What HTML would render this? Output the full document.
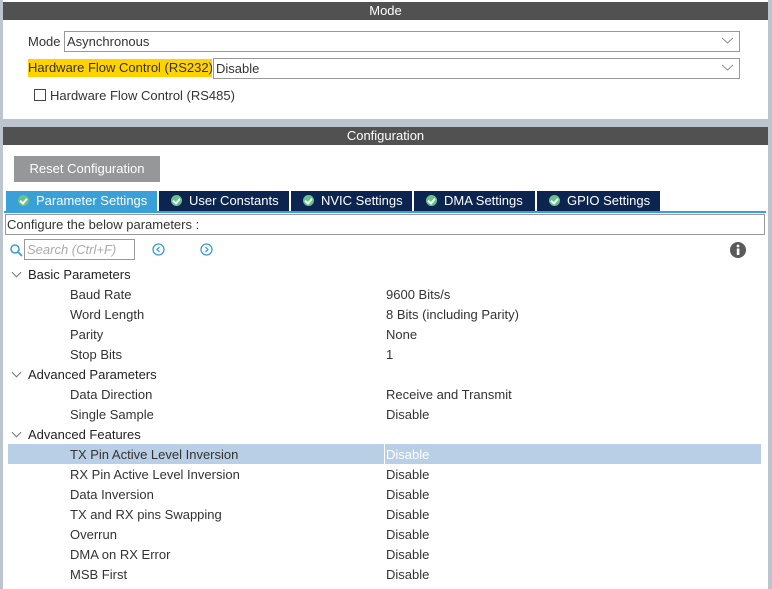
<!DOCTYPE html>
<html><head><meta charset="utf-8"><style>
*{margin:0;padding:0;box-sizing:border-box}
body{width:772px;height:589px;overflow:hidden;background:#bcc5cd;font-family:"Liberation Sans",Arial,sans-serif;font-size:13px;color:#333;position:relative}
.a{position:absolute;white-space:nowrap}
.hdr{background:#505150;color:#fff;text-align:center;font-size:13px;line-height:18px}
.sel{border:1px solid #999;background:#fff;height:21px;line-height:19px;padding-left:2px;color:#333}
.chev{position:absolute;right:6px;top:5px}
.tab{position:absolute;top:191px;height:20px;background:#0b2550;color:#fff;font-size:13px;line-height:20px;padding-left:12px;white-space:nowrap}
.tab i{display:inline-block;width:11px;height:11px;border-radius:50%;background:#66c28a;vertical-align:-1px;margin-right:7px;position:relative}
.tab i:after{content:"";position:absolute;left:3px;top:2px;width:3px;height:5px;border:solid #fff;border-width:0 2px 2px 0;transform:rotate(40deg)}
.row{position:absolute;left:8px;width:753px;height:20px;line-height:21px}
.row .k{position:absolute;left:62px}
.row .v{position:absolute;left:378px}
.g .k{left:20px}
.g:before{content:"";position:absolute;left:5px;top:5px;width:6px;height:6px;border:solid #777;border-width:0 1px 1px 0;transform:rotate(45deg)}
</style></head><body>
<div class="a" style="left:3px;top:0;width:765px;height:119px;background:#fff"></div>
<div class="a hdr" style="left:3px;top:2px;width:765px;height:18px">Mode</div>
<div class="a" style="left:28px;top:33px;line-height:17px">Mode</div>
<div class="a sel" style="left:64px;top:31px;width:676px">Asynchronous<svg class="chev" width="11" height="7"><path d="M0 1L5.5 6L11 1" fill="none" stroke="#888"/></svg></div>
<div class="a" style="left:28px;top:59px;width:184px;height:18px;background:#ffd200;line-height:18px;overflow:hidden">Hardware Flow Control (RS232)</div>
<div class="a sel" style="left:213px;top:58px;width:527px">Disable<svg class="chev" width="11" height="7"><path d="M0 1L5.5 6L11 1" fill="none" stroke="#888"/></svg></div>
<div class="a" style="left:34px;top:89px;width:12px;height:12px;border:1px solid #444;background:#fff"></div>
<div class="a" style="left:50px;top:87px;line-height:17px">Hardware Flow Control (RS485)</div>

<div class="a" style="left:3px;top:127px;width:765px;height:462px;background:#fff"></div>
<div class="a hdr" style="left:3px;top:127px;width:765px;height:18px">Configuration</div>
<div class="a" style="left:14px;top:156px;width:146px;height:26px;background:#959799;color:#fff;line-height:26px;text-align:center;font-size:13px">Reset Configuration</div>
<div class="tab" style="left:6px;width:151px;background:#3aa0d8"><i></i>Parameter Settings</div>
<div class="tab" style="left:159px;width:130px"><i></i>User Constants</div>
<div class="tab" style="left:291px;width:121px"><i></i>NVIC Settings</div>
<div class="tab" style="left:414px;width:121px"><i></i>DMA Settings</div>
<div class="tab" style="left:537px;width:123px"><i></i>GPIO Settings</div>
<div class="a" style="left:4px;top:211px;width:762px;height:2px;background:#3aa0d8"></div>
<div class="a" style="left:5px;top:214px;width:760px;height:21px;border:1px solid #999;line-height:20px;padding-left:1px">Configure the below parameters :</div>
<svg class="a" style="left:10px;top:244px" width="13" height="13"><circle cx="5" cy="5" r="4" fill="none" stroke="#3a9fd6" stroke-width="1.6"/><path d="M8 8L12 12" stroke="#3a9fd6" stroke-width="1.8"/></svg>
<div class="a" style="left:24px;top:239px;width:111px;height:21px;border:1px solid #999;color:#aaa;font-style:italic;line-height:20px;padding-left:2px">Search (Ctrl+F)</div>
<svg class="a" style="left:152px;top:243px" width="13" height="13"><circle cx="6.5" cy="6.5" r="5.5" fill="none" stroke="#3a9fd6" stroke-width="1.3"/><path d="M7.5 4L5 6.5L7.5 9" fill="none" stroke="#3a9fd6" stroke-width="1.3"/></svg>
<svg class="a" style="left:200px;top:243px" width="13" height="13"><circle cx="6.5" cy="6.5" r="5.5" fill="none" stroke="#3a9fd6" stroke-width="1.3"/><path d="M5.5 4L8 6.5L5.5 9" fill="none" stroke="#3a9fd6" stroke-width="1.3"/></svg>
<svg class="a" style="left:730px;top:242px" width="16" height="16"><circle cx="8" cy="8" r="8" fill="#5a5a5a"/><rect x="6.8" y="6.5" width="2.6" height="6.5" fill="#fff"/><circle cx="8" cy="4" r="1.4" fill="#fff"/></svg>

<div class="row g" style="top:264px"><span class="k" style="color:#222">Basic Parameters</span></div>
<div class="row" style="top:284px"><span class="k">Baud Rate</span><span class="v">9600 Bits/s</span></div>
<div class="row" style="top:304px"><span class="k">Word Length</span><span class="v">8 Bits (including Parity)</span></div>
<div class="row" style="top:324px"><span class="k">Parity</span><span class="v">None</span></div>
<div class="row" style="top:344px"><span class="k">Stop Bits</span><span class="v">1</span></div>
<div class="row g" style="top:364px"><span class="k" style="color:#222">Advanced Parameters</span></div>
<div class="row" style="top:384px"><span class="k">Data Direction</span><span class="v">Receive and Transmit</span></div>
<div class="row" style="top:404px"><span class="k">Single Sample</span><span class="v">Disable</span></div>
<div class="row g" style="top:424px"><span class="k" style="color:#222">Advanced Features</span></div>
<div class="row" style="top:444px;background:#b9cfe6"><div class="a" style="left:376px;top:0;width:1px;height:20px;background:#fff"></div><span class="k">TX Pin Active Level Inversion</span><span class="v" style="color:#fff">Disable</span></div>
<div class="row" style="top:464px"><span class="k">RX Pin Active Level Inversion</span><span class="v">Disable</span></div>
<div class="row" style="top:484px"><span class="k">Data Inversion</span><span class="v">Disable</span></div>
<div class="row" style="top:504px"><span class="k">TX and RX pins Swapping</span><span class="v">Disable</span></div>
<div class="row" style="top:524px"><span class="k">Overrun</span><span class="v">Disable</span></div>
<div class="row" style="top:544px"><span class="k">DMA on RX Error</span><span class="v">Disable</span></div>
<div class="row" style="top:564px"><span class="k">MSB First</span><span class="v">Disable</span></div>
</body></html>
